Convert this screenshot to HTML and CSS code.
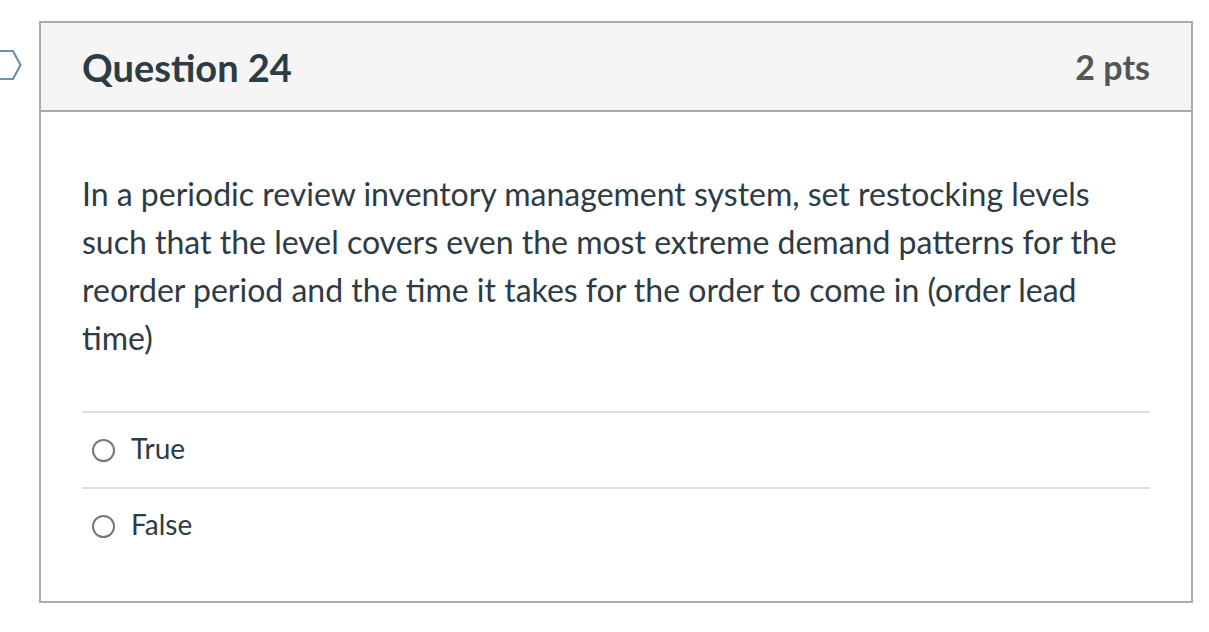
FILE: index.html
```html
<!DOCTYPE html>
<html lang="en">
<head>
<meta charset="utf-8">
<title>Question 24</title>
<link rel="stylesheet" href="styles.css">
</head>
<body>
<div class="page">
  <svg class="flag" width="24" height="34" viewBox="0 0 24 34" aria-hidden="true">
    <path d="M-6 2 H13 L20.5 16 L13 30 H-6" fill="none" stroke="#6f8fae" stroke-width="2.2" stroke-linejoin="round"/>
  </svg>
  <div class="question">
    <div class="header">
      <h2 class="title">Question 24</h2>
      <div class="points">2 pts</div>
    </div>
    <div class="body">
      <p class="text">In a periodic review inventory management system, set restocking levels such that the level covers even the most extreme demand patterns for the reorder period and the time it takes for the order to come in (order lead time)</p>
      <div class="answers">
        <label class="answer"><span class="radio"></span><span class="label">True</span></label>
        <label class="answer"><span class="radio"></span><span class="label">False</span></label>
      </div>
    </div>
  </div>
</div>
</body>
</html>
```

FILE: styles.css
```css
html, body {
  margin: 0;
  padding: 0;
  background: #ffffff;
}
body {
  font-family: Lato, "Open Sans", "Liberation Sans", sans-serif;
  color: #2d3b45;
}
.page {
  position: relative;
  padding: 21px 0 0 39px;
}
.flag {
  position: absolute;
  left: 0;
  top: 49px;
}
.question {
  width: 1150px;
  border: 2px solid #aaaaaa;
}
.header {
  display: flex;
  align-items: center;
  justify-content: space-between;
  height: 87px;
  padding: 0 41px;
  background: #f5f5f5;
  border-bottom: 2px solid #aaaaaa;
}
.title {
  margin: 0;
  font-size: 38px;
  font-weight: 700;
  color: #2d3b45;
}
.points {
  font-size: 34px;
  font-weight: 700;
  color: #555555;
}
.body {
  padding: 58px 41px 38px;
}
.text {
  margin: 0;
  font-size: 32px;
  line-height: 48px;
  color: #2d3b45;
}
.answers {
  margin-top: 49px;
}
.answer {
  display: flex;
  align-items: center;
  gap: 16px;
  height: 74px;
  padding-left: 10px;
  border-top: 2px solid #dddddd;
}
.radio {
  box-sizing: border-box;
  width: 23px;
  height: 23px;
  border: 2px solid #777777;
  border-radius: 50%;
  flex: none;
}
.label {
  font-size: 28px;
  margin-bottom: 5px;
  color: #2d3b45;
}
```
